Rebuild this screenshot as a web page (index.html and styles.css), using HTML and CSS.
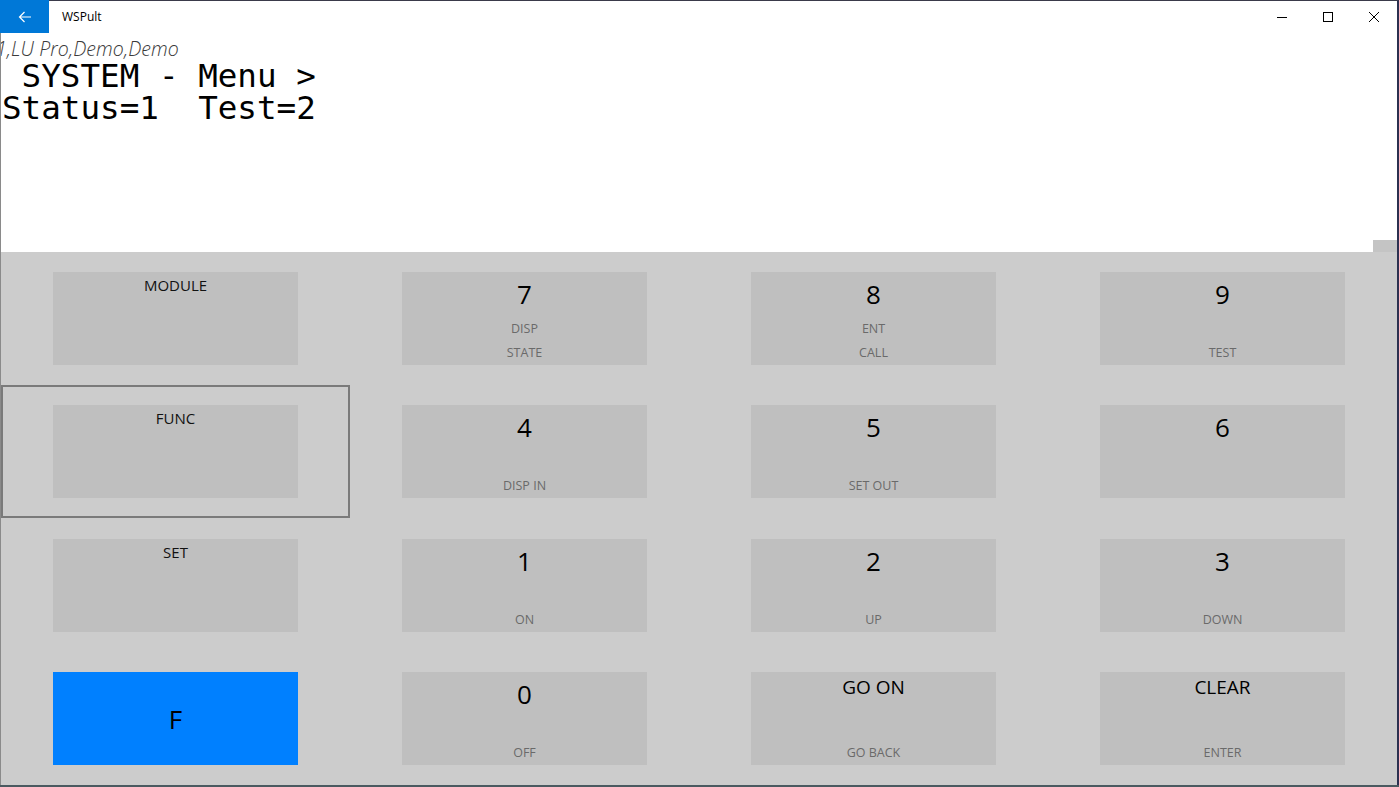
FILE: index.html
```html
<!DOCTYPE html>
<html>
<head>
<meta charset="utf-8">
<link rel="stylesheet" href="styles.css">
</head>
<body>
<div class="window">
  <div class="titlebar">
    <div class="back">
      <svg width="16" height="16" viewBox="0 0 16 16"><path d="M14 8H2.5M7.5 3L2.5 8l5 5" fill="none" stroke="#fff" stroke-width="1.2"/></svg>
    </div>
    <div class="title">WSPult</div>
    <div class="controls">
      <div class="ctl"><svg width="10" height="10" viewBox="0 0 10 10"><path d="M0 5.5h10" stroke="#000" stroke-width="1"/></svg></div>
      <div class="ctl"><svg width="10" height="10" viewBox="0 0 10 10"><rect x="0.5" y="0.5" width="9" height="9" fill="none" stroke="#000" stroke-width="1"/></svg></div>
      <div class="ctl"><svg width="10" height="10" viewBox="0 0 10 10"><path d="M0 0L10 10M10 0L0 10" stroke="#000" stroke-width="1"/></svg></div>
    </div>
  </div>
  <div class="display">
    <div class="device">1,LU Pro,Demo,Demo</div>
    <pre class="lcd"> SYSTEM - Menu &gt;
Status=1  Test=2</pre>
    <div class="thumb"></div>
  </div>
  <div class="keypad">
    <div class="cell"><div class="key"><div class="lbl">MODULE</div></div></div>
    <div class="cell"><div class="key"><div class="num">7</div><div class="sub">DISP</div><div class="sub">STATE</div></div></div>
    <div class="cell"><div class="key"><div class="num">8</div><div class="sub">ENT</div><div class="sub">CALL</div></div></div>
    <div class="cell"><div class="key"><div class="num">9</div><div class="sub"></div><div class="sub">TEST</div></div></div>

    <div class="cell focus"><div class="key"><div class="lbl">FUNC</div></div></div>
    <div class="cell"><div class="key"><div class="num">4</div><div class="sub"></div><div class="sub">DISP IN</div></div></div>
    <div class="cell"><div class="key"><div class="num">5</div><div class="sub"></div><div class="sub">SET OUT</div></div></div>
    <div class="cell"><div class="key"><div class="num">6</div><div class="sub"></div><div class="sub"></div></div></div>

    <div class="cell"><div class="key"><div class="lbl">SET</div></div></div>
    <div class="cell"><div class="key"><div class="num">1</div><div class="sub"></div><div class="sub">ON</div></div></div>
    <div class="cell"><div class="key"><div class="num">2</div><div class="sub"></div><div class="sub">UP</div></div></div>
    <div class="cell"><div class="key"><div class="num">3</div><div class="sub"></div><div class="sub">DOWN</div></div></div>

    <div class="cell"><div class="key fkey">F</div></div>
    <div class="cell"><div class="key"><div class="num">0</div><div class="sub"></div><div class="sub">OFF</div></div></div>
    <div class="cell"><div class="key"><div class="word">GO ON</div><div class="sub"></div><div class="sub">GO BACK</div></div></div>
    <div class="cell"><div class="key"><div class="word">CLEAR</div><div class="sub"></div><div class="sub">ENTER</div></div></div>
  </div>
</div>
<div class="desktop"></div>
</body>
</html>
```

FILE: styles.css
```css
* { box-sizing: border-box; }
html, body { margin: 0; padding: 0; }
body {
  width: 1399px;
  height: 787px;
  overflow: hidden;
  background: #3a4a55;
  font-family: "Segoe UI", "Open Sans", "Noto Sans", sans-serif;
}
.window {
  width: 1399px;
  height: 785px;
  background: #ffffff;
  border-top: 1px solid #3a3a4a;
  border-left: 1px solid #8a8a8a;
  border-right: 2px solid #2c3050;
  display: flex;
  flex-direction: column;
  position: relative;
}
.titlebar {
  height: 32px;
  display: flex;
  align-items: stretch;
  background: #fff;
}
.back {
  width: 49px;
  margin-left: -1px;
  margin-top: -1px;
  height: 33px;
  background: #0078d7;
  display: flex;
  align-items: center;
  justify-content: center;
}
.title {
  font-size: 12px;
  line-height: 32px;
  margin-left: 13px;
  color: #000;
}
.controls {
  margin-left: auto;
  display: flex;
}
.ctl {
  width: 46px;
  display: flex;
  align-items: center;
  justify-content: center;
}
.display {
  height: 219px;
  position: relative;
  overflow: hidden;
}
.device {
  font-style: italic;
  font-weight: 300;
  font-size: 19.5px;
  line-height: 22px;
  height: 22px;
  margin-top: 5px;
  margin-left: -5px;
  color: #3a3a3a;
  letter-spacing: 0.1px;
  white-space: nowrap;
}
.lcd {
  margin: 0;
  margin-left: 1px;
  font-family: "DejaVu Sans Mono", "Liberation Mono", monospace;
  font-size: 32.6px;
  line-height: 32px;
  color: #000;
}
.thumb {
  position: absolute;
  right: 0;
  bottom: 0;
  width: 24px;
  height: 12px;
  background: #c4c4c4;
}
.keypad {
  flex: 1;
  background: #cccccc;
  display: grid;
  grid-template-columns: repeat(4, 1fr);
  grid-template-rows: 133px 133px 134px 133px;
}
.cell {
  display: flex;
  align-items: center;
  justify-content: center;
}
.cell.focus {
  border: 2px solid #7a7a7a;
}
.key {
  width: 245px;
  height: 93px;
  background: #bfbfbf;
  display: flex;
  flex-direction: column;
  align-items: center;
  color: #000;
}
.lbl {
  font-size: 15px;
  line-height: 20px;
  margin-top: 3px;
  color: #111;
}
.num {
  font-size: 26px;
  line-height: 32px;
  margin-top: 6px;
}
.word {
  font-size: 19px;
  line-height: 26px;
  margin-top: 2px;
}
.sub {
  font-size: 12.5px;
  line-height: 16px;
  height: 16px;
  margin-top: 8px;
  color: #6a6a6a;
}
.num + .sub { margin-top: 11px; }
.word + .sub { margin-top: 21px; }
.fkey {
  background: #0080ff;
  justify-content: center;
  font-size: 26px;
  line-height: 32px;
}
.desktop {
  height: 2px;
  background: #4a5a60;
}
```
